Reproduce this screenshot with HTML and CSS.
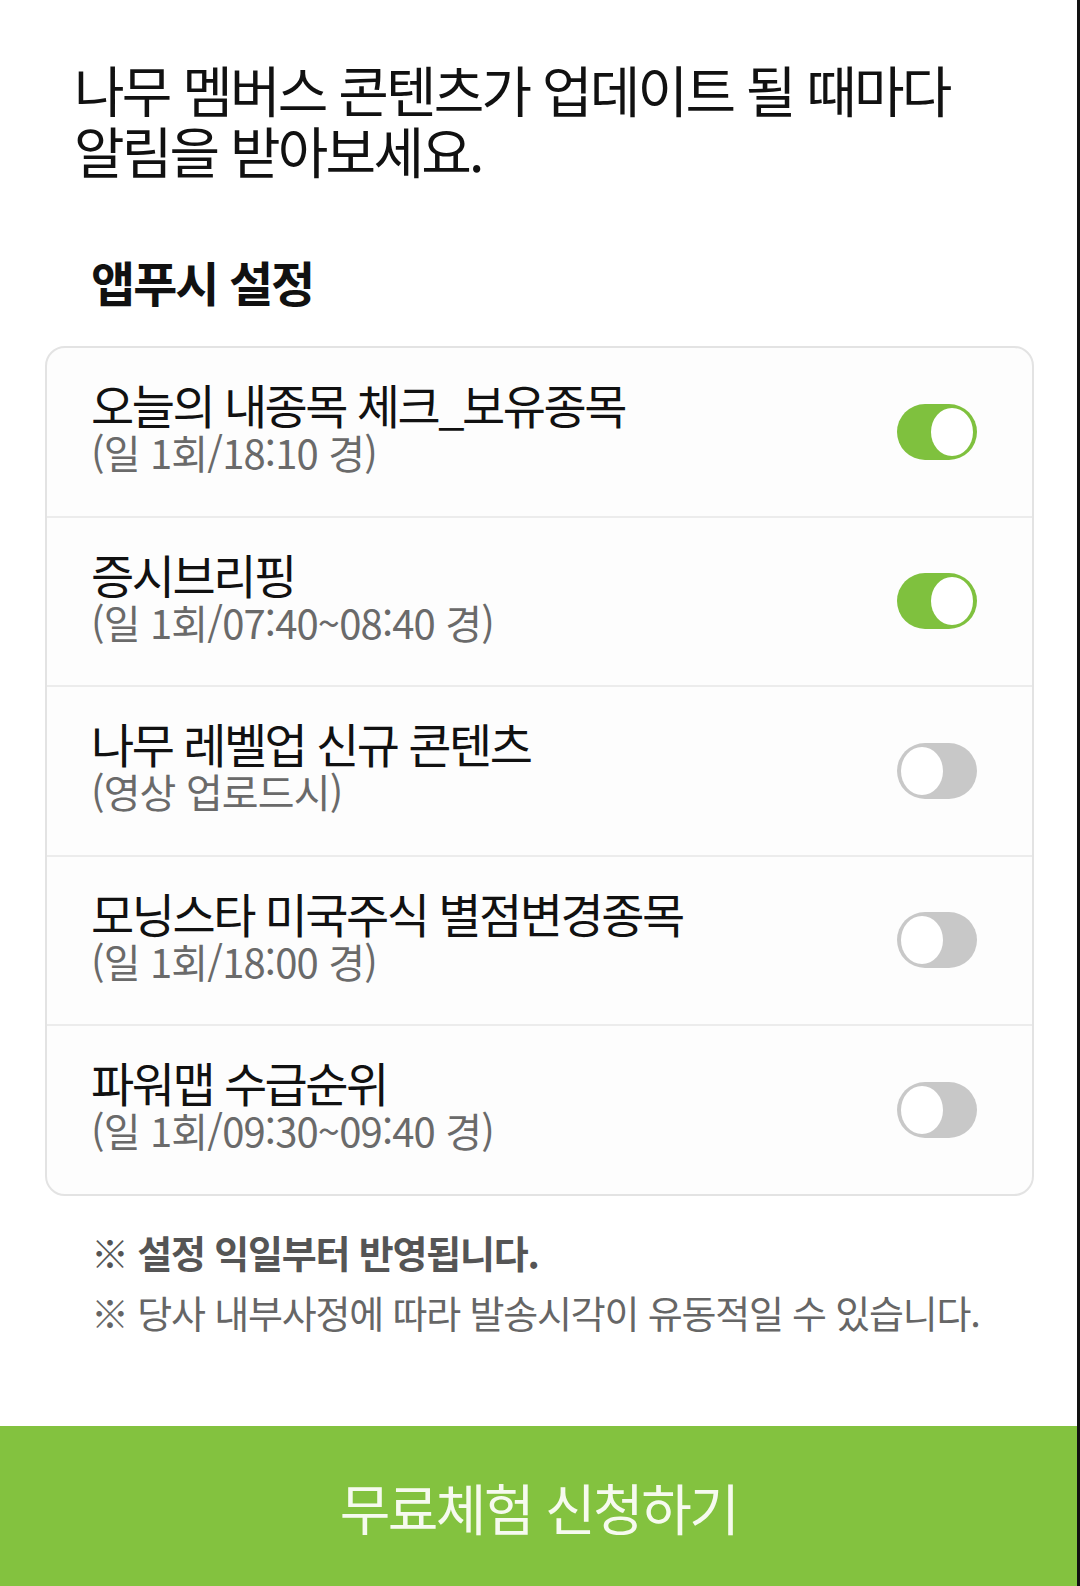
FILE: index.html
```html
<!DOCTYPE html>
<html lang="ko">
<head>
    <meta charset="UTF-8">
    <meta name="viewport" content="width=device-width, initial-scale=1.0">
    <title>앱푸시 설정</title>
    <link rel="stylesheet" href="styles.css">
</head>
<body>
    <div class="page">
        <h1 class="intro">나무 멤버스 콘텐츠가 업데이트 될 때마다<br>알림을 받아보세요.</h1>
        <h2 class="section-title">앱푸시 설정</h2>
        <ul class="push-list">
            <li class="push-item">
                <div class="push-text">
                    <p class="push-name">오늘의 내종목 체크_보유종목</p>
                    <p class="push-time">(일 1회/18:10 경)</p>
                </div>
                <span class="toggle on"><span class="knob"></span></span>
            </li>
            <li class="push-item">
                <div class="push-text">
                    <p class="push-name">증시브리핑</p>
                    <p class="push-time">(일 1회/07:40~08:40 경)</p>
                </div>
                <span class="toggle on"><span class="knob"></span></span>
            </li>
            <li class="push-item">
                <div class="push-text">
                    <p class="push-name">나무 레벨업 신규 콘텐츠</p>
                    <p class="push-time">(영상 업로드시)</p>
                </div>
                <span class="toggle"><span class="knob"></span></span>
            </li>
            <li class="push-item">
                <div class="push-text">
                    <p class="push-name">모닝스타 미국주식 별점변경종목</p>
                    <p class="push-time">(일 1회/18:00 경)</p>
                </div>
                <span class="toggle"><span class="knob"></span></span>
            </li>
            <li class="push-item">
                <div class="push-text">
                    <p class="push-name">파워맵 수급순위</p>
                    <p class="push-time">(일 1회/09:30~09:40 경)</p>
                </div>
                <span class="toggle"><span class="knob"></span></span>
            </li>
        </ul>
        <div class="notes">
            <p class="note strong">※ 설정 익일부터 반영됩니다.</p>
            <p class="note">※ 당사 내부사정에 따라 발송시각이 유동적일 수 있습니다.</p>
        </div>
        <button class="trial-btn">무료체험 신청하기</button>
    </div>
</body>
</html>
```

FILE: styles.css
```css
* {
    box-sizing: border-box;
}
body {
    margin: 0;
    background: #fff;
    font-family: "Noto Sans CJK KR", "Noto Sans", sans-serif;
    color: #111;
}
.page {
    width: 1080px;
    height: 1586px;
    border-right: 3px solid #111;
    display: flex;
    flex-direction: column;
    overflow: hidden;
}
.intro {
    margin: 58px 0 0 74px;
    font-size: 55px;
    line-height: 61px;
    font-weight: 400;
    letter-spacing: -2.8px;
}
.section-title {
    margin: 73px 0 0 91px;
    font-size: 48px;
    line-height: 56px;
    font-weight: 700;
    letter-spacing: -2px;
}
.push-list {
    list-style: none;
    padding: 0;
    margin: 37px 43px 0 45px;
    border: 2px solid #e3e3e3;
    border-radius: 20px;
    background: #fdfdfd;
}
.push-item {
    height: 169.5px;
    padding: 0 55px 0 44px;
    display: flex;
    align-items: center;
    justify-content: space-between;
    border-bottom: 2px solid #ececec;
}
.push-item:last-child {
    height: 167.5px;
    border-bottom: none;
}
.push-text {
    padding-bottom: 10px;
}
.push-text p {
    margin: 0;
}
.push-name {
    font-size: 47px;
    line-height: 51px;
    letter-spacing: -2.5px;
    color: #111;
}
.push-time {
    font-size: 40px;
    line-height: 46px;
    letter-spacing: -0.85px;
    color: #6a6a6a;
}
.toggle {
    position: relative;
    width: 80px;
    height: 56px;
    border-radius: 28px;
    background: #c8c8c8;
    flex-shrink: 0;
}
.toggle.on {
    background: #7fc13e;
}
.knob {
    position: absolute;
    top: 4px;
    left: 4px;
    width: 42px;
    height: 48px;
    border-radius: 50%;
    background: #fff;
}
.toggle.on .knob {
    left: auto;
    right: 4px;
}
.notes {
    margin: 26px 0 0 91px;
}
.note {
    margin: 0;
    font-size: 38px;
    line-height: 60px;
    letter-spacing: -1.2px;
    color: #666;
}
.note.strong {
    font-weight: 700;
    color: #555;
}
.trial-btn {
    margin-top: auto;
    height: 160px;
    width: 100%;
    border: none;
    background: #83c23f;
    color: #f6faef;
    font-family: inherit;
    font-size: 55px;
    letter-spacing: -2.5px;
    cursor: pointer;
}
```
